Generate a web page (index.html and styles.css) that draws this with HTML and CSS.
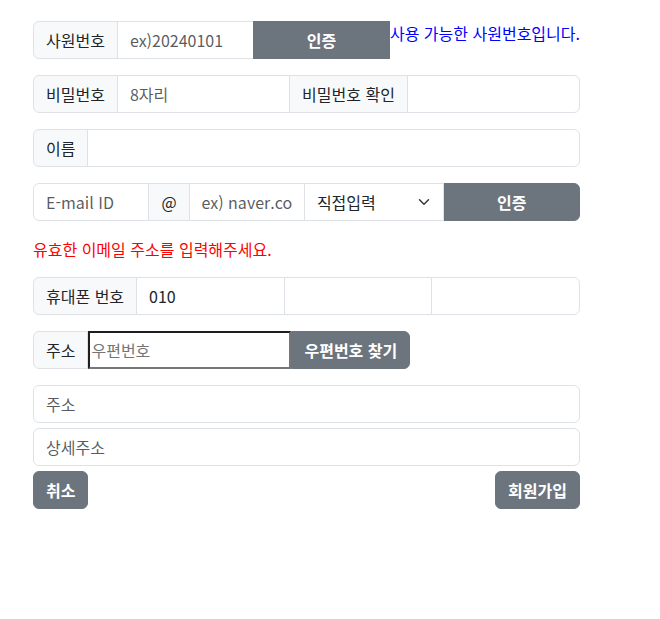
FILE: index.html
```html
<!DOCTYPE html>
<html lang="ko">
<head>
    <meta charset="UTF-8">
    <meta name="viewport" content="width=device-width, initial-scale=1.0">
    <title>회원가입</title>
    <link rel="stylesheet" href="styles.css">
</head>
<body>

<div class="join-form">

    <!-- 사원번호 -->
    <div class="input-group mb-3">
        <span class="input-group-text">사원번호</span>
        <input type="text" class="form-control" placeholder="ex)20240101">
        <button class="btn btn-secondary btn-quarter btn-flat">인증</button>
        <span class="check-ok">사용 가능한 사원번호입니다.</span>
    </div>

    <!-- 비밀번호 -->
    <div class="input-group mb-3">
        <span class="input-group-text">비밀번호</span>
        <input type="password" class="form-control" placeholder="8자리">
        <span class="input-group-text">비밀번호 확인</span>
        <input type="password" class="form-control">
    </div>

    <!-- 이름 -->
    <div class="input-group mb-3">
        <span class="input-group-text">이름</span>
        <input type="text" class="form-control">
    </div>

    <!-- 이메일 -->
    <div class="input-group mb-3">
        <input type="text" class="form-control" placeholder="E-mail ID">
        <span class="input-group-text">@</span>
        <input type="text" class="form-control" placeholder="ex) naver.com">
        <div class="select-wrap">
            <select class="form-select">
                <option>직접입력</option>
                <option>naver.com</option>
                <option>gmail.com</option>
                <option>daum.net</option>
            </select>
            <svg class="select-arrow" width="16" height="12" viewBox="0 0 16 16">
                <path d="m2 5 6 6 6-6" fill="none" stroke="#343a40" stroke-width="2" stroke-linecap="round" stroke-linejoin="round"/>
            </svg>
        </div>
        <button class="btn btn-secondary btn-quarter">인증</button>
    </div>
    <div class="check-error mb-3">유효한 이메일 주소를 입력해주세요.</div>

    <!-- 휴대폰 -->
    <div class="input-group mb-3">
        <span class="input-group-text">휴대폰 번호</span>
        <input type="text" class="form-control" value="010">
        <input type="text" class="form-control">
        <input type="text" class="form-control">
    </div>

    <!-- 주소 -->
    <div class="input-group mb-3">
        <span class="input-group-text">주소</span>
        <input type="text" class="zip-input" placeholder="우편번호">
        <button class="btn btn-secondary">우편번호 찾기</button>
    </div>
    <input type="text" class="form-control block mb-1" placeholder="주소">
    <input type="text" class="form-control block mb-1" placeholder="상세주소">

    <div class="form-buttons">
        <button class="btn btn-secondary">취소</button>
        <button class="btn btn-secondary">회원가입</button>
    </div>
</div>

</body>
</html>
```

FILE: styles.css
```css
* { box-sizing: border-box; }
body { margin: 0; padding: 21px 33px; font-family: "Noto Sans CJK KR", "Noto Sans", sans-serif; font-size: 16px; line-height: 1.5; color: #212529; background: #fff; }
.join-form { width: 547px; }
.mb-3 { margin-bottom: 16px; }
.mb-1 { margin-bottom: 5px; }

.input-group { display: flex; align-items: stretch; width: 100%; }
.input-group > * { margin-left: -1px; }
.input-group > *:first-child { margin-left: 0; }

.input-group-text { display: flex; align-items: center; padding: 6px 12px; white-space: nowrap; background: #f8f9fa; border: 1px solid #dee2e6; }
.input-group > :first-child { border-radius: 6px 0 0 6px; }
.input-group > :last-child { border-radius: 0 6px 6px 0; }

.form-control { font: inherit; color: #212529; padding: 6px 12px; border: 1px solid #dee2e6; background: #fff; border-radius: 0; outline: none; }
.form-control::placeholder { color: rgba(33, 37, 41, 0.75); }
.input-group > .form-control { flex: 1 1 26px; width: 26px; min-width: 0; }
.form-control.block { display: block; width: 100%; border-radius: 6px; }

.select-wrap { position: relative; flex: 1 1 50px; width: 50px; min-width: 0; display: flex; }
.form-select { font: inherit; color: #212529; width: 100%; padding: 6px 36px 6px 12px; border: 1px solid #dee2e6; border-radius: 0; background: #fff; appearance: none; -webkit-appearance: none; outline: none; }
.select-arrow { position: absolute; right: 12px; top: 13px; pointer-events: none; }

.zip-input { font: inherit; width: 203px; padding: 1px; border-style: solid; border-width: 2px; border-color: #1e1e1e #767676 #767676 #1e1e1e; border-radius: 0; background: #fff; outline: none; }
.zip-input::placeholder { color: #757575; }
.input-group > .zip-input { margin-left: 0; }
.input-group > .zip-input + .btn { margin-left: 0; }

.btn { font: inherit; font-weight: 700; padding: 6px 12px; border: 1px solid transparent; border-radius: 6px; cursor: pointer; white-space: nowrap; }
.btn-secondary { color: #fff; background: #6c757d; border-color: #6c757d; }
.input-group > .btn { border-radius: 0; }
.input-group > .btn:last-child { border-radius: 0 6px 6px 0; }
.btn-quarter { width: 25%; flex: none; }
.btn-flat { border-radius: 0; }

.check-ok { color: #0000ff; border: none; margin-left: 0; white-space: nowrap; align-self: flex-start; line-height: 1.5; }
.input-group > .check-ok:last-child { border-radius: 0; }
.check-error { color: #ff0000; }

.form-buttons { display: flex; justify-content: space-between; }
```
